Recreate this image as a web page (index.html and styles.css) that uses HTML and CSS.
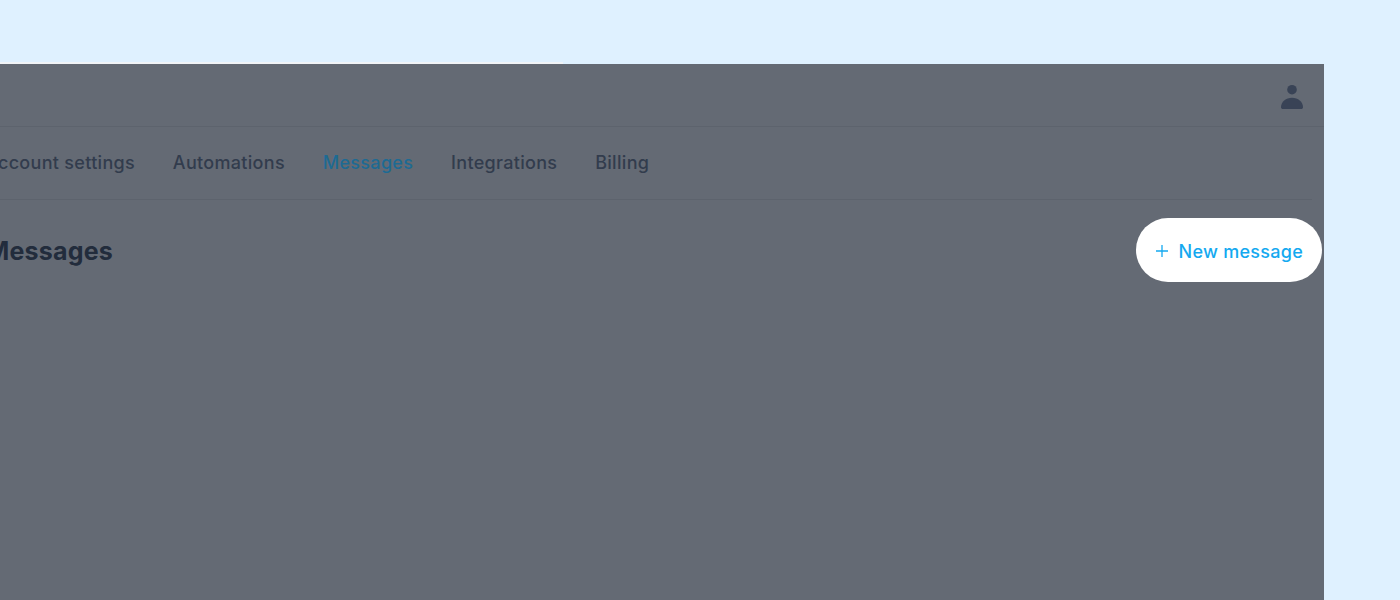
FILE: index.html
```html
<!DOCTYPE html>
<html lang="en">
<head>
<meta charset="utf-8">
<title>Messages</title>
<link rel="stylesheet" href="styles.css">
</head>
<body>
<div class="strip"></div>
<main class="panel">
  <header class="topbar">
    <svg class="user" width="24" height="26" viewBox="0 0 24 26" aria-hidden="true">
      <circle cx="12" cy="5.7" r="4.8"/>
      <path d="M1 23.2C1 17.8 6 13.7 12 13.7S23 17.8 23 23.2C23 24.4 22.2 25 21 25H3C1.8 25 1 24.4 1 23.2Z"/>
    </svg>
  </header>
  <nav class="tabs">
    <a class="tab">Account settings</a>
    <a class="tab">Automations</a>
    <a class="tab active">Messages</a>
    <a class="tab">Integrations</a>
    <a class="tab">Billing</a>
  </nav>
  <section class="heading">
    <h1 class="title">Messages</h1>
    <button class="new-btn" type="button">
      <svg class="plus" width="12" height="12" viewBox="0 0 12 12" aria-hidden="true"><path d="M6 0V12M0 6H12"/></svg>
      <span>New message</span>
    </button>
  </section>
</main>
</body>
</html>
```
FILE: styles.css
```css
* { box-sizing: border-box; }
html, body { height: 100%; }
body {
  margin: 0;
  height: 600px;
  overflow: hidden;
  background: #dff1ff;
  font-family: Inter, "Liberation Sans", sans-serif;
}
.strip {
  width: 563px;
  height: 2px;
  margin-top: 62px;
  background: #f1f4f7;
}
.panel {
  width: 1324px;
  height: 536px;
  background: #646a74;
  overflow: hidden;
}
.topbar {
  height: 63px;
  display: flex;
  justify-content: flex-end;
  align-items: flex-start;
  padding: 20px 20px 0 0;
  border-bottom: 1px solid #5d636d;
}
.user { display: block; fill: #394356; }
.tabs {
  display: flex;
  gap: 37.8px;
  height: 73px;
  margin: 0 12px 0 -15px;
  padding-bottom: 2px;
  align-items: center;
  border-bottom: 1px solid #5d636d;
}
.tab {
  font-size: 18px;
  font-weight: 500;
  letter-spacing: 0.31px;
  color: #323c4d;
  white-space: nowrap;
}
.tab.active { color: #1d6a93; }
.heading {
  display: flex;
  justify-content: space-between;
  align-items: center;
  margin-top: 18px;
  padding-right: 2px;
}
.title {
  margin: 2px 0 0 -14px;
  font-size: 25px;
  font-weight: 700;
  letter-spacing: 0.2px;
  color: #222c3c;
}
.new-btn {
  display: flex;
  align-items: center;
  gap: 10.5px;
  width: 186px;
  height: 64px;
  padding: 2px 0 0 20px;
  border: 0;
  border-radius: 32px;
  background: #fff;
  color: #14a9f0;
  font: 500 18px Inter, "Liberation Sans", sans-serif;
  letter-spacing: 0.27px;
  white-space: nowrap;
}
.plus { stroke: #14a9f0; stroke-width: 1.3; fill: none; margin-top: -1px; }
```
